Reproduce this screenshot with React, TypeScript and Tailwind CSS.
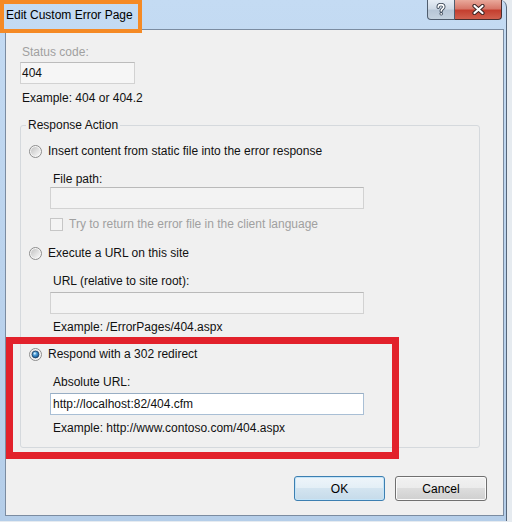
import React from "react";

function Radio({ checked }: { checked?: boolean }) {
  return (
    <svg width="13" height="13" viewBox="0 0 13 13" className="shrink-0">
      <defs>
        <linearGradient id="radio-off" x1="0" y1="0" x2="1" y2="1">
          <stop offset="0" stopColor="#c2c2c2" />
          <stop offset="1" stopColor="#fafafa" />
        </linearGradient>
        <radialGradient id="radio-dot" cx="0.4" cy="0.35" r="0.7">
          <stop offset="0" stopColor="#9ad6f7" />
          <stop offset="0.5" stopColor="#3b8ccb" />
          <stop offset="1" stopColor="#144a7e" />
        </radialGradient>
      </defs>
      <circle cx="6.5" cy="6.5" r="6" fill="#f6f6f6" stroke="#8c8c8c" />
      <circle cx="6.5" cy="6.5" r="4.6" fill="url(#radio-off)" />
      {checked && (
        <>
          <circle cx="6.5" cy="6.5" r="3.4" fill="url(#radio-dot)" stroke="#1d3f63" strokeWidth="0.8" />
          <circle cx="5.7" cy="5.5" r="1" fill="#e6f6ff" opacity="0.8" />
        </>
      )}
    </svg>
  );
}

function TextBox({ value, active }: { value?: string; active?: boolean }) {
  return (
    <div
      className={
        active
          ? "flex h-[22px] w-[314px] items-center border border-[#a9bfd5] border-t-[#98aec4] bg-white pl-[2px]"
          : "flex h-[22px] w-[314px] items-center border border-[#d2d2d2] border-t-[#b9b9b9] bg-[#f3f3f3] pl-[2px]"
      }
    >
      {value}
    </div>
  );
}

export default function App() {
  return (
    <div className="relative h-[522px] w-[512px] overflow-hidden bg-[#e6ebf0] font-['Liberation_Sans',Arial,sans-serif] text-[12px] leading-[16px] text-[#111]">
      {/* window */}
      <div className="flex h-[521px] w-[507px] flex-col rounded-t-[7px] border-r border-[#56667a] bg-gradient-to-b from-[#c4dbf3] via-[#bbd3ed] to-[#b5cee9] pb-[5px] pl-[5px] pr-[2px]">
        {/* title bar */}
        <div className="flex h-[29px] shrink-0 items-start">
          <div className="ml-[1px] mt-[7px] text-black">Edit Custom Error Page</div>
          <div className="ml-auto mr-[2px] flex">
            <div className="flex h-[20px] w-[28px] items-center justify-center rounded-bl-[4px] border border-t-0 border-[#4f5d6e] bg-[linear-gradient(#e6edf5,#cfdae6_45%,#b7c6d6_55%,#c4d2df)]">
              <svg width="10" height="13" viewBox="0 0 10 13">
                <path d="M2.2 4.2C2.2 2.4 3.6 1.6 5 1.6C6.6 1.6 7.8 2.5 7.8 3.9C7.8 5.6 5.2 5.9 5.2 8" fill="none" stroke="#3b4858" strokeWidth="3.4" strokeLinecap="round" />
                <circle cx="5.2" cy="10.8" r="1.7" fill="#3b4858" />
                <path d="M2.2 4.2C2.2 2.4 3.6 1.6 5 1.6C6.6 1.6 7.8 2.5 7.8 3.9C7.8 5.6 5.2 5.9 5.2 8" fill="none" stroke="#fff" strokeWidth="1.6" strokeLinecap="round" />
                <circle cx="5.2" cy="10.8" r="0.9" fill="#fff" />
              </svg>
            </div>
            <div className="flex h-[20px] w-[47px] items-center justify-center rounded-br-[4px] border border-l-0 border-t-0 border-[#4a2e2e] bg-[linear-gradient(#e9a99b,#d7786a_45%,#c43f2f_55%,#d0604e)]">
              <svg width="13" height="11" viewBox="0 0 13 11">
                <path d="M2.5 2L10.5 9M10.5 2L2.5 9" stroke="#3a2424" strokeWidth="4.2" strokeLinecap="round" />
                <path d="M2.5 2L10.5 9M10.5 2L2.5 9" stroke="#fff" strokeWidth="2.2" strokeLinecap="round" />
              </svg>
            </div>
          </div>
        </div>

        {/* client area */}
        <div className="flex flex-1 flex-col border border-[#7b8ca1] bg-[#f0f0f0] pl-[14px]">
          <div className="ml-[2px] mt-[14px] text-[#a0a0a0]">Status code:</div>
          <div className="mt-[2px] flex h-[22px] w-[115px] items-center border border-[#d2d2d2] border-t-[#bcbcbc] bg-[#f6f6f6] pl-[1px]">
            404
          </div>
          <div className="ml-[2px] mt-[6px]">Example: 404 or 404.2</div>

          <fieldset className="mt-[11px] w-[460px] rounded-[3px] border border-[#d5d9dd] pb-[11px]">
            <legend className="ml-[5px] px-[2px]">Response Action</legend>

            <div className="ml-[8px] mt-[10px] flex items-center gap-[6px]">
              <Radio />
              <span>Insert content from static file into the error response</span>
            </div>
            <div className="ml-[32px] mt-[12px]">File path:</div>
            <div className="ml-[29px]">
              <TextBox />
            </div>
            <div className="ml-[29px] mt-[7px] flex items-center gap-[6px] text-[#a0a0a0]">
              <span className="h-[13px] w-[13px] shrink-0 border border-[#c6c6c6] bg-[#f4f4f4]" />
              <span>Try to return the error file in the client language</span>
            </div>

            <div className="ml-[8px] mt-[13px] flex items-center gap-[6px]">
              <Radio />
              <span>Execute a URL on this site</span>
            </div>
            <div className="ml-[32px] mt-[12px]">URL (relative to site root):</div>
            <div className="ml-[29px] mt-[3px]">
              <TextBox />
            </div>
            <div className="ml-[32px] mt-[5px]">Example: /ErrorPages/404.aspx</div>

            <div className="ml-[8px] mt-[11px] flex items-center gap-[6px]">
              <Radio checked />
              <span>Respond with a 302 redirect</span>
            </div>
            <div className="ml-[32px] mt-[12px]">Absolute URL:</div>
            <div className="ml-[29px] mt-[3px]">
              <TextBox value="http://localhost:82/404.cfm" active />
            </div>
            <div className="ml-[32px] mt-[5px]">Example: http://www.contoso.com/404.aspx</div>
          </fieldset>

          <div className="mt-[28px] flex justify-end gap-[10px] pr-[16px]">
            <button className="h-[25px] w-[91px] rounded-[3px] border border-[#3c7fb1] bg-[linear-gradient(#eef5fa,#e3eef6_50%,#d3e4f0_50%,#c6dbea)] text-black shadow-[inset_0_0_0_1px_#c4e4f8]">
              OK
            </button>
            <button className="h-[25px] w-[92px] rounded-[3px] border border-[#707070] bg-[linear-gradient(#f2f2f2,#ebebeb_50%,#dddddd_50%,#cfcfcf)] text-black shadow-[inset_0_0_0_1px_#fbfbfb]">
              Cancel
            </button>
          </div>
        </div>
      </div>

      {/* annotations */}
      <div className="absolute left-0 top-0 h-[33px] w-[142px] border-[4px] border-[#f58a25]" />
      <div className="absolute left-[6px] top-[337px] h-[122px] w-[393px] border-[7px] border-[#e2212b]" />
    </div>
  );
}
